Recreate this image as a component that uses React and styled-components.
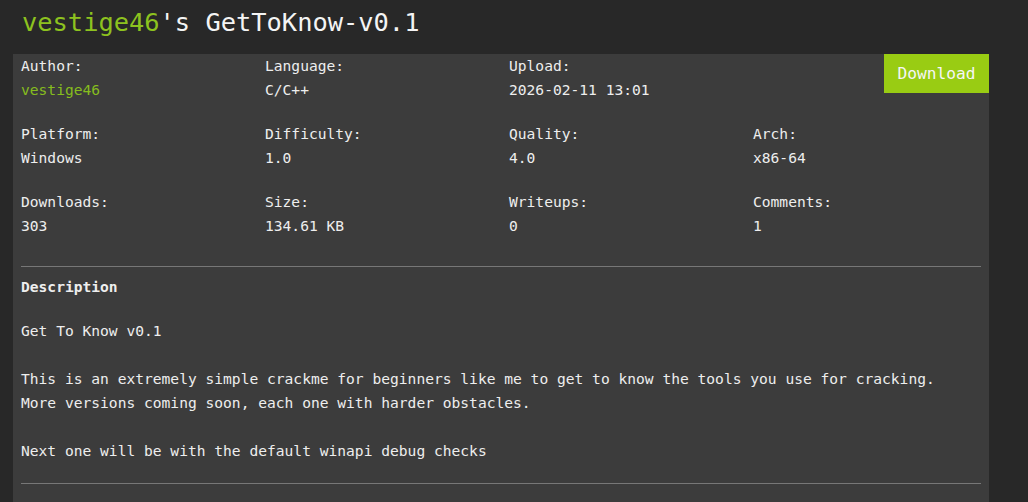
import React from "react";
import styled, { createGlobalStyle } from "styled-components";

const GlobalStyle = createGlobalStyle`
  html, body {
    margin: 0;
    padding: 0;
    background: #282828;
    color: #eeeeee;
    font-family: "DejaVu Sans Mono", "Liberation Mono", monospace;
  }
`;

const fields = [
  [
    { label: "Author:", value: "vestige46", link: true },
    { label: "Language:", value: "C/C++" },
    { label: "Upload:", value: "2026-02-11 13:01" },
    null,
  ],
  [
    { label: "Platform:", value: "Windows" },
    { label: "Difficulty:", value: "1.0" },
    { label: "Quality:", value: "4.0" },
    { label: "Arch:", value: "x86-64" },
  ],
  [
    { label: "Downloads:", value: "303" },
    { label: "Size:", value: "134.61 KB" },
    { label: "Writeups:", value: "0" },
    { label: "Comments:", value: "1" },
  ],
];

const description = `Get To Know v0.1

This is an extremely simple crackme for beginners like me to get to know the tools you use for cracking.
More versions coming soon, each one with harder obstacles.

Next one will be with the default winapi debug checks`;

export default function App() {
  return (
    <>
      <GlobalStyle />
      <Page>
        <Title>
          <Green>vestige46</Green>'s GetToKnow-v0.1
        </Title>
        <Panel>
          <InfoGrid>
            {fields.map((row, i) => (
              <InfoRow key={i}>
                {row.map((f, j) =>
                  f ? (
                    <Cell key={j}>
                      <Label>{f.label}</Label>
                      <Value $link={f.link}>{f.value}</Value>
                    </Cell>
                  ) : (
                    <ButtonCell key={j}>
                      <DownloadButton>Download</DownloadButton>
                    </ButtonCell>
                  )
                )}
              </InfoRow>
            ))}
          </InfoGrid>
          <Rule $top={28} />
          <Section>
            <Heading>Description</Heading>
            <Body>{description}</Body>
          </Section>
          <Rule $top={20} />
          <Filler />
        </Panel>
      </Page>
    </>
  );
}

const Page = styled.div`
  padding: 4px 39px 0 13px;
`;

const Title = styled.h1`
  margin: 0 0 14px;
  padding-left: 9px;
  font-size: 25.4px;
  font-weight: normal;
  line-height: 36px;
  color: #f4f4f4;
  white-space: nowrap;
`;

const Green = styled.span`
  color: #8dc21f;
`;

const Panel = styled.div`
  background: #3c3c3c;
  font-size: 14.6px;
  line-height: 24px;
  display: flex;
  flex-direction: column;
`;

const InfoGrid = styled.div`
  display: flex;
  flex-direction: column;
  gap: 20px;
`;

const InfoRow = styled.div`
  display: grid;
  grid-template-columns: repeat(4, 1fr);
`;

const Cell = styled.div`
  padding: 0 8px;
`;

const ButtonCell = styled.div`
  display: flex;
  justify-content: flex-end;
  align-items: flex-start;
`;

const Label = styled.div`
  color: #eeeeee;
`;

const Value = styled.div`
  color: ${(p) => (p.$link ? "#86bd1e" : "#eeeeee")};
`;

const DownloadButton = styled.button`
  border: 0;
  background: #99cc13;
  color: #f6f6f6;
  font-family: inherit;
  font-size: 16.2px;
  height: 39px;
  width: 105px;
  padding: 0;
  cursor: pointer;
`;

const Rule = styled.hr`
  margin: ${(p) => p.$top}px 8px 8px;
  border: 0;
  border-top: 1px solid #777777;
`;

const Section = styled.div`
  padding: 0 8px;
`;

const Heading = styled.div`
  font-weight: bold;
  margin-bottom: 20px;
`;

const Body = styled.div`
  white-space: pre-wrap;
`;

const Filler = styled.div`
  height: 30px;
`;
